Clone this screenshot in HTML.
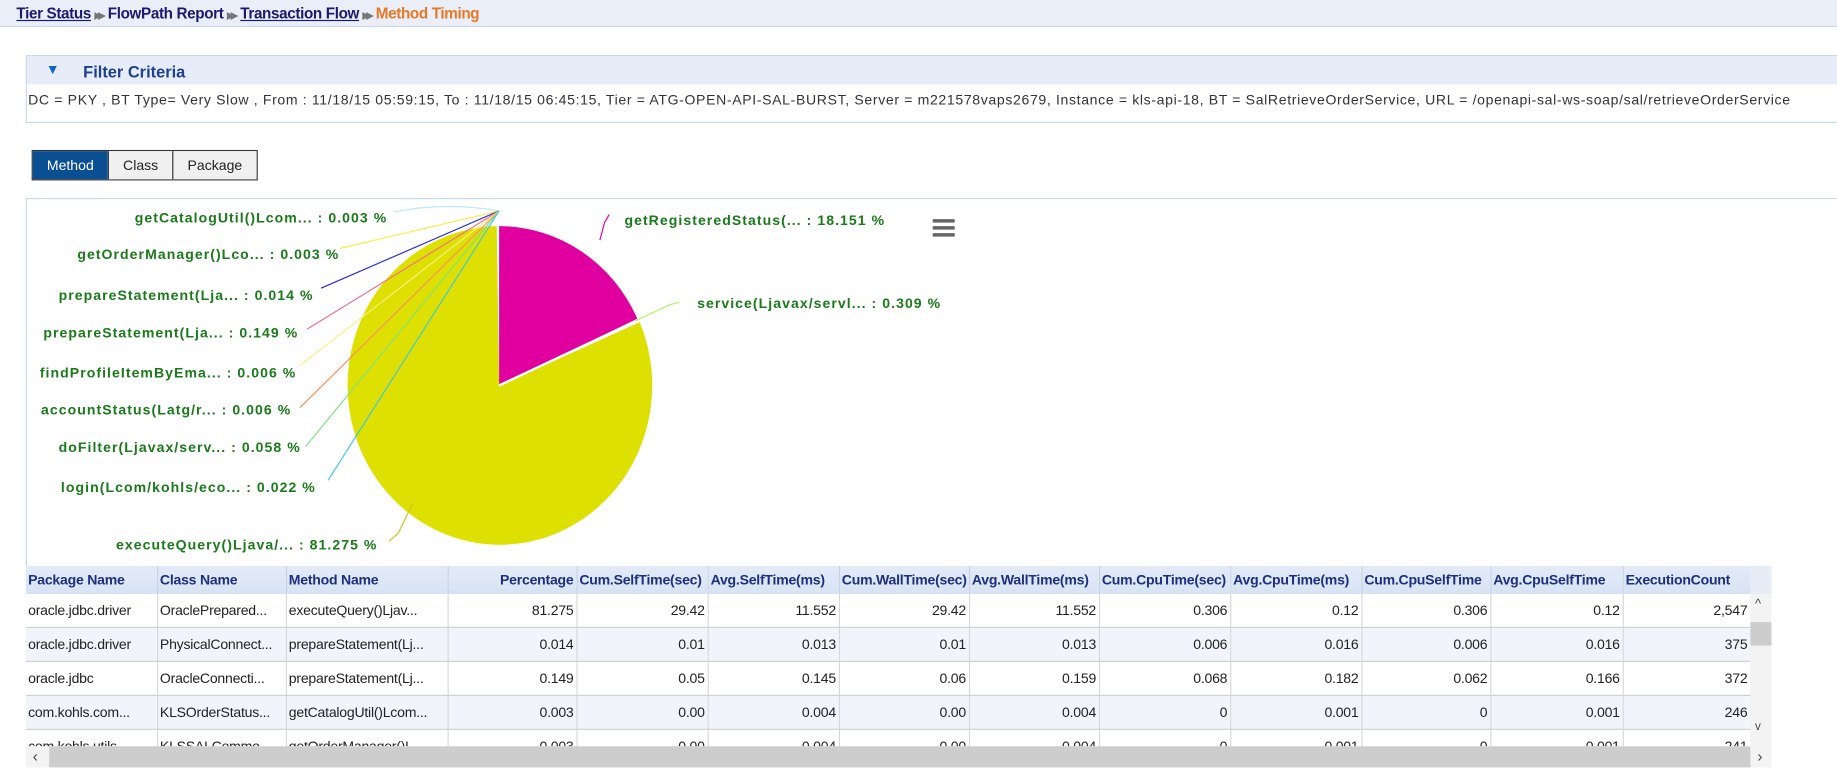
<!DOCTYPE html>
<html><head><meta charset="utf-8"><style>
html,body{margin:0;padding:0;width:1837px;height:779px;overflow:hidden;background:#fff;font-family:"Liberation Sans",sans-serif;}
#w{position:absolute;left:0;top:0;width:1568px;height:665px;transform:scale(1.1716);transform-origin:0 0;}
.abs{position:absolute;}
.top{left:0;top:0;width:1568px;height:22px;background:#e9eef8;border-bottom:1px solid #cfd9ec;}
.bc{left:14px;top:4px;font-size:13px;font-weight:bold;color:#1a1a6e;white-space:nowrap;letter-spacing:-0.3px}
.bc u{color:#1a1a6e}
.bc .ar{color:#777;font-size:8px;letter-spacing:-3px;margin:0 5px 0 3px}
.fp{left:22px;top:47px;width:1546px;height:56px;border:1px solid #c9d7ef;border-right:none;}
.fh{left:0;top:0;width:1546px;height:24px;background:#e6edf9;}
.fh .t{position:absolute;left:48px;top:5px;font-size:14px;font-weight:bold;color:#1f3f8f;}
.fh .tri{position:absolute;left:16px;top:4px;font-size:12px;color:#1565c0;}
.ft{left:1px;top:30px;font-size:12px;color:#333;white-space:nowrap;letter-spacing:0.55px}
.btns{left:27px;top:128px;height:24px;border:1px solid #333;display:flex;font-size:12px;}
.btns div{padding:0 12px;line-height:24px;background:#f0f0f0;border-left:1px solid #333;color:#222}
.btns div:first-child{background:#0b4f93;color:#fff;border-left:none}
.cp{left:22px;top:169px;width:1546px;height:316px;border:1px solid #c9d7ef;border-right:none;border-bottom:none}
.tbl{left:22px;top:483px;width:1472px;height:154px;overflow:hidden;}
table{border-collapse:collapse;font-size:12px;table-layout:fixed;width:1472px}
th{height:24px;background:linear-gradient(#e3ebf7,#d7e3f4);color:#1f2f7f;font-weight:bold;text-align:left;padding:0 2px;border-right:1px solid #c7d2e4;white-space:nowrap;overflow:hidden;letter-spacing:-0.2px}
td{height:28px;border-right:1px solid #d8d8d8;border-bottom:1px solid #d0d0d0;padding:0 2px;white-space:nowrap;overflow:hidden;color:#222;letter-spacing:-0.2px}
td.r,th.r{text-align:right}
tr.alt td{background:#f1f4fb}
.vs{left:1494px;top:507px;width:18px;height:130px;background:#f3f3f3;}
.hs{left:22px;top:637px;width:1490px;height:18px;background:#f3f3f3;}
.hd{left:1494px;top:483px;width:18px;height:24px;background:#e6edf7}
</style></head><body><div id="w">
<div class="abs top"></div>
<div class="abs bc"><u>Tier Status</u><span class="ar">▶▶</span>FlowPath Report<span class="ar">▶▶</span><u>Transaction Flow</u><span class="ar">▶▶</span><span style="color:#e87722">Method Timing</span></div>
<div class="abs fp"><div class="abs fh"><span class="tri">▼</span><span class="t">Filter Criteria</span></div>
<div class="abs ft">DC = PKY , BT Type= Very Slow , From : 11/18/15 05:59:15, To : 11/18/15 06:45:15, Tier = ATG-OPEN-API-SAL-BURST, Server = m221578vaps2679, Instance = kls-api-18, BT = SalRetrieveOrderService, URL = /openapi-sal-ws-soap/sal/retrieveOrderService</div></div>
<div class="abs btns"><div>Method</div><div>Class</div><div>Package</div></div>
<div class="abs cp"></div>
<svg class="abs" style="left:0;top:0" width="1568" height="490">
<path d="M426,329 L426,193 A130,136 0 0 1 544,272 Z" fill="#e000a0"/>
<path d="M426,329 L546,275 A130,136 0 1 1 424,193 Z" fill="#dde000"/>
<line x1="426" y1="329" x2="545" y2="273" stroke="#fff" stroke-width="2"/>
<g fill="none" stroke-width="1">
<path d="M336,181 Q380,172 426,180" stroke="#bfe8f8"/>
<path d="M290,212 L426,180" stroke="#f4f040"/>
<path d="M274,246 L426,180" stroke="#2828e0"/>
<path d="M262,281 L426,180" stroke="#f07090"/>
<path d="M256,312 L426,180" stroke="#f8f080"/>
<path d="M256,348 L426,180" stroke="#f89060"/>
<path d="M261,381 L426,180" stroke="#80e080"/>
<path d="M280,410 L426,180" stroke="#40c8e0"/>
<path d="M332,462 L340,455 L352,430" stroke="#c8c820"/>
<path d="M512,205 L516,190 L520,183" stroke="#e000a0"/>
<path d="M542,274 L572,260 L580,258" stroke="#b0f060"/>
</g>
<g font-family="Liberation Sans,sans-serif" font-size="12" font-weight="bold" fill="#1a7a1a" letter-spacing="0.9">
<text x="115" y="190">getCatalogUtil()Lcom... : 0.003 %</text>
<text x="66" y="221">getOrderManager()Lco... : 0.003 %</text>
<text x="50" y="256">prepareStatement(Lja... : 0.014 %</text>
<text x="37" y="288">prepareStatement(Lja... : 0.149 %</text>
<text x="34" y="322">findProfileItemByEma... : 0.006 %</text>
<text x="35" y="354">accountStatus(Latg/r... : 0.006 %</text>
<text x="50" y="386">doFilter(Ljavax/serv... : 0.058 %</text>
<text x="52" y="420">login(Lcom/kohls/eco... : 0.022 %</text>
<text x="99" y="469">executeQuery()Ljava/... : 81.275 %</text>
<text x="533" y="192">getRegisteredStatus(... : 18.151 %</text>
<text x="595" y="263">service(Ljavax/servl... : 0.309 %</text>
</g>
<g fill="#666"><rect x="796" y="187" width="19" height="3" rx="1"/><rect x="796" y="193" width="19" height="3" rx="1"/><rect x="796" y="199" width="19" height="3" rx="1"/></g>
</svg>
<div class="abs tbl"><table>
<colgroup><col style="width:112px"><col style="width:110px"><col style="width:138px"><col style="width:110px"><col style="width:112px"><col style="width:112px"><col style="width:111px"><col style="width:111px"><col style="width:112px"><col style="width:112px"><col style="width:110px"><col style="width:113px"><col style="width:109px"></colgroup>
<tr><th>Package Name</th><th>Class Name</th><th>Method Name</th><th class="r">Percentage</th><th>Cum.SelfTime(sec)</th><th>Avg.SelfTime(ms)</th><th>Cum.WallTime(sec)</th><th>Avg.WallTime(ms)</th><th>Cum.CpuTime(sec)</th><th>Avg.CpuTime(ms)</th><th>Cum.CpuSelfTime</th><th>Avg.CpuSelfTime</th><th>ExecutionCount</th></tr>
<tr><td>oracle.jdbc.driver</td><td>OraclePrepared...</td><td>executeQuery()Ljav...</td><td class="r">81.275</td><td class="r">29.42</td><td class="r">11.552</td><td class="r">29.42</td><td class="r">11.552</td><td class="r">0.306</td><td class="r">0.12</td><td class="r">0.306</td><td class="r">0.12</td><td class="r">2,547</td></tr>
<tr class="alt"><td>oracle.jdbc.driver</td><td>PhysicalConnect...</td><td>prepareStatement(Lj...</td><td class="r">0.014</td><td class="r">0.01</td><td class="r">0.013</td><td class="r">0.01</td><td class="r">0.013</td><td class="r">0.006</td><td class="r">0.016</td><td class="r">0.006</td><td class="r">0.016</td><td class="r">375</td></tr>
<tr><td>oracle.jdbc</td><td>OracleConnecti...</td><td>prepareStatement(Lj...</td><td class="r">0.149</td><td class="r">0.05</td><td class="r">0.145</td><td class="r">0.06</td><td class="r">0.159</td><td class="r">0.068</td><td class="r">0.182</td><td class="r">0.062</td><td class="r">0.166</td><td class="r">372</td></tr>
<tr class="alt"><td>com.kohls.com...</td><td>KLSOrderStatus...</td><td>getCatalogUtil()Lcom...</td><td class="r">0.003</td><td class="r">0.00</td><td class="r">0.004</td><td class="r">0.00</td><td class="r">0.004</td><td class="r">0</td><td class="r">0.001</td><td class="r">0</td><td class="r">0.001</td><td class="r">246</td></tr>
<tr><td>com.kohls.utils</td><td>KLSSALCommo...</td><td>getOrderManager()L...</td><td class="r">0.003</td><td class="r">0.00</td><td class="r">0.004</td><td class="r">0.00</td><td class="r">0.004</td><td class="r">0</td><td class="r">0.001</td><td class="r">0</td><td class="r">0.001</td><td class="r">241</td></tr>
</table></div>
<div class="abs hd"></div>
<div class="abs vs"><div class="abs" style="left:4px;top:3px;font-size:11px;color:#444">^</div><div class="abs" style="left:0;top:24px;width:18px;height:20px;background:#cdcdcd"></div><div class="abs" style="left:4px;top:108px;font-size:10px;color:#444">v</div></div>
<div class="abs hs"><div class="abs" style="left:6px;top:1px;font-size:13px;color:#444">‹</div><div class="abs" style="left:20px;top:0;width:1452px;height:18px;background:#cdcdcd"></div><div class="abs" style="left:1478px;top:1px;font-size:13px;color:#444">›</div></div>
</div></body></html>
